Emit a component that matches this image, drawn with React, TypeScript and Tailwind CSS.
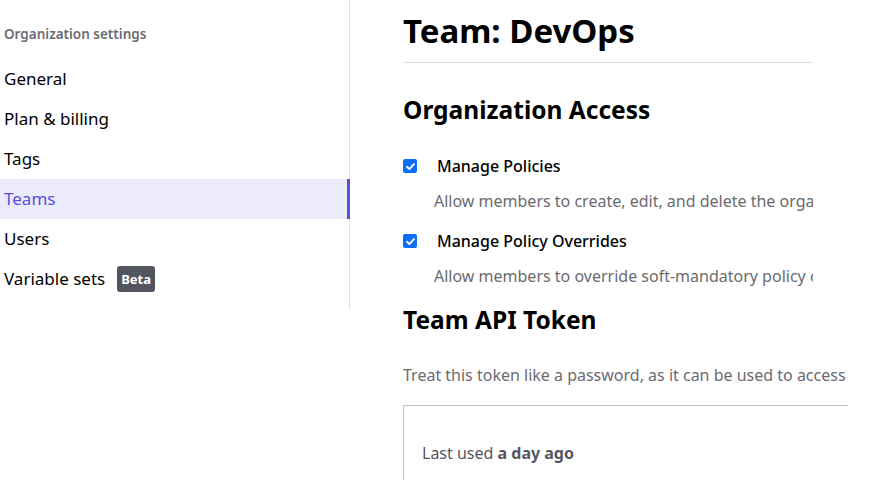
import React from "react";

const navItems = [
  { label: "General" },
  { label: "Plan & billing" },
  { label: "Tags" },
  { label: "Teams", active: true },
  { label: "Users" },
  { label: "Variable sets", badge: "Beta" },
];

function Check() {
  return (
    <span className="flex h-[14px] w-[14px] shrink-0 items-center justify-center rounded-[2px] bg-[#0b6ef5]">
      <svg viewBox="0 0 12 12" className="h-[11px] w-[11px]" fill="none">
        <path d="M2.2 6.3 4.8 8.8 9.8 3.4" stroke="white" strokeWidth="2" strokeLinecap="round" strokeLinejoin="round" />
      </svg>
    </span>
  );
}

export default function App() {
  return (
    <div className="flex h-[480px] w-[880px] overflow-hidden bg-white font-['Noto_Sans',sans-serif] text-black">
      {/* Sidebar */}
      <aside className="h-[310px] w-[350px] shrink-0 border-r border-[#e0e0e4] pt-[24px]">
        <div className="px-[4px] text-[13.5px] font-semibold leading-[20px] text-[#6b6b75]">Organization settings</div>
        <nav className="mt-[15px] flex flex-col">
          {navItems.map((item) => (
            <div
              key={item.label}
              className={
                item.active
                  ? "flex h-[40px] items-center border-r-[3px] border-[#5b4de0] bg-[#ecebfa] px-[4px] text-[17px] text-[#5b4de0] -mr-px"
                  : "flex h-[40px] items-center px-[4px] text-[17px] text-black"
              }
            >
              {item.label}
              {item.badge && (
                <span className="ml-[12px] rounded-[3px] bg-[#52545e] px-[4px] text-[13px] font-bold leading-[26px] text-white">
                  {item.badge}
                </span>
              )}
            </div>
          ))}
        </nav>
      </aside>

      {/* Main */}
      <main className="flex-1 pl-[53px] pt-[8px]">
        <div className="w-[410px] overflow-hidden whitespace-nowrap">
          <h1 className="text-[33px] font-bold leading-[46px]">Team: DevOps</h1>
          <div className="mt-[8px] h-px bg-[#dcdce5]" />
          <h2 className="mt-[29px] text-[24.5px] font-bold leading-[36px]">Organization Access</h2>
          <div className="mt-[28px] flex flex-col">
            <label className="flex h-[20px] items-center gap-[20px]">
              <Check />
              <span className="text-[16px] font-medium">Manage Policies</span>
            </label>
            <p className="mt-[13px] pl-[31px] text-[16px] leading-[24px] text-[#6b6b70]">
              Allow members to create, edit, and delete the organization's Sentinel policies.
            </p>
            <label className="mt-[18px] flex h-[20px] items-center gap-[20px]">
              <Check />
              <span className="text-[16px] font-medium">Manage Policy Overrides</span>
            </label>
            <p className="mt-[13px] pl-[31px] text-[16px] leading-[24px] text-[#6b6b70]">
              Allow members to override soft-mandatory policy checks.
            </p>
          </div>
        </div>

        <div className="w-[445px] overflow-hidden whitespace-nowrap">
          <h2 className="mt-[14px] text-[24.5px] font-bold leading-[36px]">Team API Token</h2>
          <p className="mt-[25px] text-[16px] leading-[24px] text-[#6b6b70]">
            Treat this token like a password, as it can be used to access your account without a username.
          </p>
          <div className="mt-[18px] h-[120px] border-l border-t border-[#bfbfc6] pl-[18px] pt-[35px]">
            <p className="text-[16px] leading-[24px] text-[#55555f]">
              Last used <span className="font-bold">a day ago</span>
            </p>
          </div>
        </div>
      </main>
    </div>
  );
}
